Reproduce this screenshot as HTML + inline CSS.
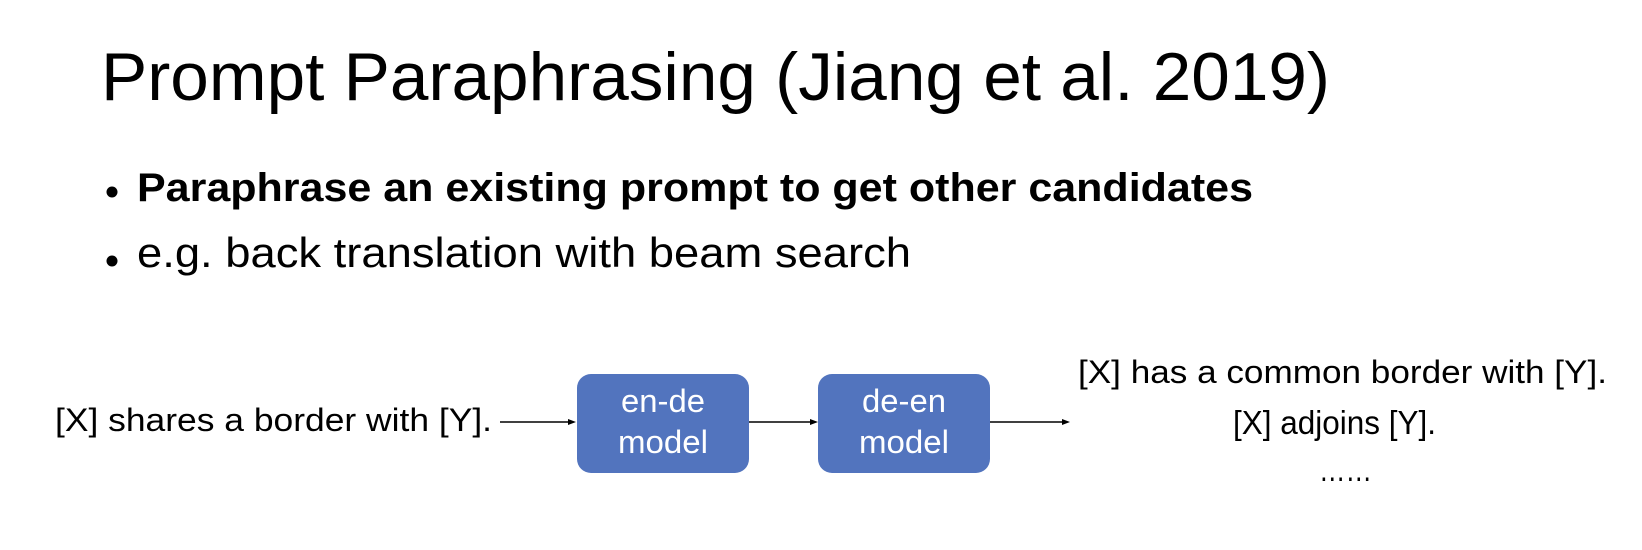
<!DOCTYPE html>
<html><head><meta charset="utf-8"><style>
html,body{margin:0;padding:0;background:#fff;}
svg{display:block;}
text{font-family:"Liberation Sans",sans-serif;fill:#000;}
</style></head><body>
<svg width="1642" height="550" viewBox="0 0 1642 550">
<text x="101" y="100" font-size="68" textLength="1229" lengthAdjust="spacingAndGlyphs">Prompt Paraphrasing (Jiang et al. 2019)</text>
<circle cx="112" cy="192" r="5.5"/>
<text x="137" y="201" font-size="40" font-weight="bold" textLength="1116" lengthAdjust="spacingAndGlyphs">Paraphrase an existing prompt to get other candidates</text>
<circle cx="112" cy="261" r="5.5"/>
<text x="137" y="267" font-size="42" textLength="774" lengthAdjust="spacingAndGlyphs">e.g. back translation with beam search</text>
<text x="55" y="431" font-size="32" textLength="437" lengthAdjust="spacingAndGlyphs">[X] shares a border with [Y].</text>
<g stroke="#000" stroke-width="1.5">
<line x1="500" y1="422" x2="570" y2="422"/>
<line x1="749" y1="422" x2="812" y2="422"/>
<line x1="990" y1="422" x2="1064" y2="422"/>
</g>
<g fill="#000">
<polygon points="576,422 568,419 568,425"/>
<polygon points="818,422 810,419 810,425"/>
<polygon points="1070,422 1062,419 1062,425"/>
</g>
<rect x="577" y="374" width="172" height="99" rx="14" fill="#5274be"/>
<rect x="818" y="374" width="172" height="99" rx="14" fill="#5274be"/>
<g font-size="32" text-anchor="middle">
<text x="663" y="412" style="fill:#fff" textLength="84" lengthAdjust="spacingAndGlyphs">en-de</text>
<text x="663" y="453" style="fill:#fff" textLength="90" lengthAdjust="spacingAndGlyphs">model</text>
<text x="904" y="412" style="fill:#fff" textLength="84" lengthAdjust="spacingAndGlyphs">de-en</text>
<text x="904" y="453" style="fill:#fff" textLength="90" lengthAdjust="spacingAndGlyphs">model</text>
</g>
<text x="1078" y="383" font-size="32" textLength="529" lengthAdjust="spacingAndGlyphs">[X] has a common border with [Y].</text>
<text x="1233" y="434" font-size="33" textLength="203" lengthAdjust="spacingAndGlyphs">[X] adjoins [Y].</text>
<text x="1319" y="481" font-size="32" textLength="53" lengthAdjust="spacingAndGlyphs">……</text>
</svg>
</body></html>
